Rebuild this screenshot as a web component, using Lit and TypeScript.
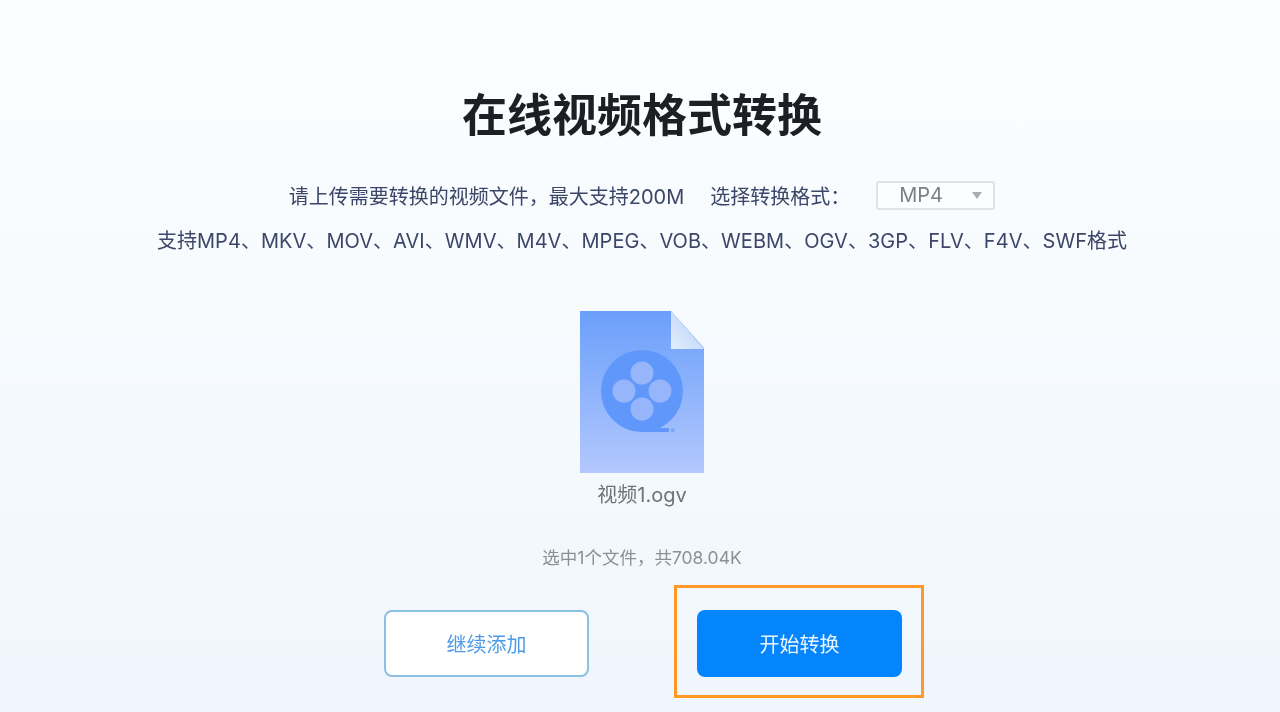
import { LitElement, html, css } from "lit";
import { customElement } from "lit/decorators.js";

@customElement("app-root")
export class AppRoot extends LitElement {
  static styles = css`
    :host {
      display: block;
      width: 100%;
      height: 712px;
      overflow: hidden;
      background: linear-gradient(180deg, #fcfdfe 0%, #f7fbfe 40%, #f0f6fd 100%);
      font-family: "Inter", "Noto Sans CJK SC", sans-serif;
    }
    .page {
      display: flex;
      flex-direction: column;
      align-items: center;
      height: 712px;
      box-sizing: border-box;
      padding-top: 82px;
      padding-left: 4px;
      filter: blur(0.6px);
    }
    h1 {
      margin: 0;
      font-size: 45px;
      line-height: 62px;
      font-weight: 700;
      color: #1d1f25;
      font-family: "Noto Sans CJK SC", sans-serif;
    }
    .opts {
      margin-top: 36px;
      display: flex;
      align-items: center;
      height: 30px;
      font-size: 20px;
      color: #3c4668;
    }
    .label { margin-left: 26px; }
    .select {
      margin-left: 26px;
      width: 119px;
      height: 29px;
      box-sizing: border-box;
      border: 2px solid #dfe3e8;
      border-radius: 3px;
      background: #fcfdfe;
      color: #7a7f88;
      display: flex;
      align-items: center;
      padding-left: 21px;
      justify-content: space-between;
      padding-right: 11px;
    }
    .caret {
      width: 0;
      height: 0;
      border-left: 5px solid transparent;
      border-right: 5px solid transparent;
      border-top: 7px solid #a9adb4;
    }
    .formats {
      margin-top: 16px;
      font-size: 20px;
      line-height: 30px;
      color: #3c4668;
      white-space: nowrap;
      letter-spacing: 0.04px;
    }
    .file {
      margin-top: 55px;
      display: flex;
      flex-direction: column;
      align-items: center;
    }
    .file svg { display: block; }
    .name {
      margin-top: 8px;
      font-size: 20px;
      line-height: 28px;
      color: #6f7378;
    }
    .count {
      margin-top: 37px;
      font-size: 17.5px;
      line-height: 24px;
      color: #8b8f96;
    }
    .actions {
      margin-top: 40px;
      margin-left: 2px;
      display: flex;
      gap: 108px;
    }
    .btn {
      position: relative;
      width: 205px;
      height: 67px;
      box-sizing: border-box;
      border-radius: 8px;
      display: flex;
      align-items: center;
      justify-content: center;
      font-size: 20px;
    }
    .add {
      background: #ffffff;
      border: 2px solid #8cc0e2;
      color: #4c9be8;
    }
    .start {
      background: #0485fd;
      color: #eaf4ff;
    }
    .mark {
      position: absolute;
      left: -23px;
      right: -22px;
      top: -25px;
      bottom: -21px;
      border: 3px solid #ff9826;
      pointer-events: none;
    }
  `;

  render() {
    return html`
      <div class="page">
        <h1>在线视频格式转换</h1>
        <div class="opts">
          <span>请上传需要转换的视频文件，最大支持200M</span>
          <span class="label">选择转换格式：</span>
          <div class="select"><span>MP4</span><i class="caret"></i></div>
        </div>
        <div class="formats">支持MP4、MKV、MOV、AVI、WMV、M4V、MPEG、VOB、WEBM、OGV、3GP、FLV、F4V、SWF格式</div>
        <div class="file">
          <svg width="124" height="162" viewBox="0 0 124 162">
            <defs>
              <linearGradient id="body" x1="0" y1="0" x2="0" y2="1">
                <stop offset="0" stop-color="#6b9ffb" />
                <stop offset="1" stop-color="#b3c8fd" />
              </linearGradient>
              <linearGradient id="fold" x1="0" y1="1" x2="1" y2="0">
                <stop offset="0" stop-color="#e3eefc" />
                <stop offset="1" stop-color="#b4cdf8" />
              </linearGradient>
            </defs>
            <path d="M0 0H91L124 37V162H0Z" fill="url(#body)" />
            <path d="M91 0L124 38H91Z" fill="url(#fold)" />
            <circle cx="62" cy="80" r="41" fill="#5f97fb" />
            <path d="M62 117H89V121H62Z" fill="#5f97fb" />
            <rect x="91" y="117.500" width="3.500" height="3.500" fill="#7ba7f5" />
            <g fill="#97b5fa">
              <circle cx="62" cy="62" r="11.500" />
              <circle cx="44" cy="80" r="11.500" />
              <circle cx="80" cy="80" r="11.500" />
              <circle cx="62" cy="98" r="11.500" />
            </g>
          </svg>
          <div class="name">视频1.ogv</div>
        </div>
        <div class="count">选中1个文件，共708.04K</div>
        <div class="actions">
          <div class="btn add">继续添加</div>
          <div class="btn start">开始转换<span class="mark"></span></div>
        </div>
      </div>
    `;
  }
}
